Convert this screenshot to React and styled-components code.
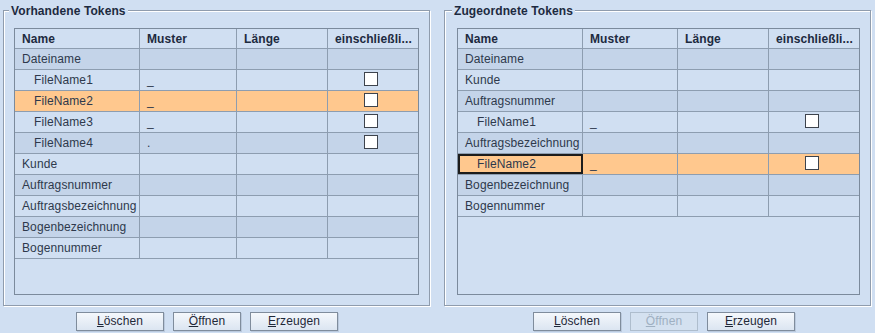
import React from "react";
import styled, { createGlobalStyle } from "styled-components";

const BG = "#d0dff2";
const ALT = "#c4d4e9";
const SEL = "#ffc88e";
const GRID = "#8d9db0";

const GlobalStyle = createGlobalStyle`
  html, body { margin: 0; padding: 0; background: ${BG}; }
  body {
    font-family: "Liberation Sans", Arial, sans-serif;
    font-size: 12px;
    letter-spacing: 0.1px;
    color: #2b3547;
  }
`;

const Screen = styled.div`
  display: flex;
  width: 875px;
  height: 333px;
  background: ${BG};
  overflow: hidden;
`;

const Half = styled.section`
  display: flex;
  flex-direction: column;
  width: ${(p) => p.$width}px;
  padding: 10px 0 0 ${(p) => p.$left}px;
  box-sizing: border-box;
`;

const Group = styled.div`
  display: flex;
  flex-direction: column;
  width: 427px;
  height: 296px;
  box-sizing: border-box;
  border: 1px solid #8f9cad;
  box-shadow: inset 1px 1px 0 #ffffff, 1px 1px 0 #ffffff;
  padding: 0 10px 10px ${(p) => p.$padLeft}px;
`;

const Title = styled.div`
  align-self: flex-start;
  margin: -7px 0 10px -5px;
  padding: 0 2px;
  line-height: 14px;
  font-weight: bold;
  color: #1d2a40;
  background: ${BG};
`;

const Frame = styled.div`
  flex: 1;
  display: flex;
  flex-direction: column;
  border: 1px solid #7b8a9c;
  background: ${BG};
`;

const Row = styled.div`
  display: grid;
  grid-template-columns: ${(p) => p.$cols};
  height: ${(p) => (p.$head ? 20 : 21)}px;
  flex: none;
  box-sizing: border-box;
  border-bottom: 1px solid ${GRID};
  background: ${(p) => (p.$selected ? SEL : p.$alt ? ALT : BG)};
`;

const Cell = styled.div`
  display: flex;
  align-items: center;
  min-width: 0;
  box-sizing: border-box;
  padding: 0 7px 0 ${(p) => (p.$indent ? 19 : 7)}px;
  border-right: 1px solid ${GRID};
  white-space: nowrap;
  overflow: hidden;
  color: #2e394c;
  ${(p) =>
    p.$focus &&
    `outline: 2px solid #1c1c1c; outline-offset: -2px;`}
  &:last-child { border-right: none; }
`;

const HeadCell = styled(Cell)`
  font-weight: bold;
  color: #1d2a40;
`;

const CheckCell = styled(Cell)`
  justify-content: center;
  padding: 0 4px 0 0;
`;

const Box = styled.span`
  width: 14px;
  height: 14px;
  box-sizing: border-box;
  border: 1px solid #3d434d;
  background: #ffffff;
  margin-bottom: 2px;
`;

const ButtonRow = styled.div`
  display: flex;
  gap: 9px;
  margin-top: 6px;
  padding-left: ${(p) => p.$offset}px;
`;

const Button = styled.button`
  width: ${(p) => p.$w}px;
  height: 19px;
  padding: 0;
  box-sizing: border-box;
  border: 1px solid #7f8c9c;
  border-radius: 0;
  background: linear-gradient(#f5f8fc, #dbe5f1);
  box-shadow: 1px 1px 0 rgba(90, 105, 125, 0.18);
  font-family: "Liberation Sans", Arial, sans-serif;
  font-size: 12px;
  letter-spacing: 0.1px;
  line-height: 17px;
  color: #1f2838;
  &:disabled {
    color: #9fb0c2;
    border-color: #aebdcd;
    background: #d4e1f0;
    box-shadow: none;
  }
`;

const Mnemonic = styled.span`
  text-decoration: underline;
`;

const LEFT_ROWS = [
  { name: "Dateiname" },
  { name: "FileName1", child: true, muster: "_", check: true },
  { name: "FileName2", child: true, muster: "_", check: true, selected: true },
  { name: "FileName3", child: true, muster: "_", check: true },
  { name: "FileName4", child: true, muster: ".", check: true },
  { name: "Kunde" },
  { name: "Auftragsnummer" },
  { name: "Auftragsbezeichnung" },
  { name: "Bogenbezeichnung" },
  { name: "Bogennummer" },
];

const RIGHT_ROWS = [
  { name: "Dateiname" },
  { name: "Kunde" },
  { name: "Auftragsnummer" },
  { name: "FileName1", child: true, muster: "_", check: true },
  { name: "Auftragsbezeichnung" },
  { name: "FileName2", child: true, muster: "_", check: true, selected: true, focus: true },
  { name: "Bogenbezeichnung" },
  { name: "Bogennummer" },
];

function TokenTable({ rows, cols }) {
  return (
    <Frame>
      <Row $head $cols={cols}>
        <HeadCell>Name</HeadCell>
        <HeadCell>Muster</HeadCell>
        <HeadCell>Länge</HeadCell>
        <HeadCell>einschließli...</HeadCell>
      </Row>
      {rows.map((r, i) => (
        <Row key={r.name} $cols={cols} $alt={i % 2 === 0} $selected={r.selected}>
          <Cell $indent={r.child} $focus={r.focus}>{r.name}</Cell>
          <Cell>{r.muster || ""}</Cell>
          <Cell />
          <CheckCell>{r.check ? <Box /> : null}</CheckCell>
        </Row>
      ))}
    </Frame>
  );
}

function Buttons({ offset, openDisabled }) {
  return (
    <ButtonRow $offset={offset}>
      <Button $w={88}>
        <Mnemonic>L</Mnemonic>öschen
      </Button>
      <Button $w={68} disabled={openDisabled}>
        <Mnemonic>Ö</Mnemonic>ffnen
      </Button>
      <Button $w={88}>
        <Mnemonic>E</Mnemonic>rzeugen
      </Button>
    </ButtonRow>
  );
}

export default function App() {
  return (
    <>
      <GlobalStyle />
      <Screen>
        <Half $width={437} $left={3}>
          <Group $padLeft={10}>
            <Title>Vorhandene Tokens</Title>
            <TokenTable rows={LEFT_ROWS} cols="125px 97px 91px 1fr" />
          </Group>
          <Buttons offset={73} />
        </Half>
        <Half $width={438} $left={7}>
          <Group $padLeft={12}>
            <Title>Zugeordnete Tokens</Title>
            <TokenTable rows={RIGHT_ROWS} cols="125px 95px 91px 1fr" />
          </Group>
          <Buttons offset={89} openDisabled />
        </Half>
      </Screen>
    </>
  );
}
